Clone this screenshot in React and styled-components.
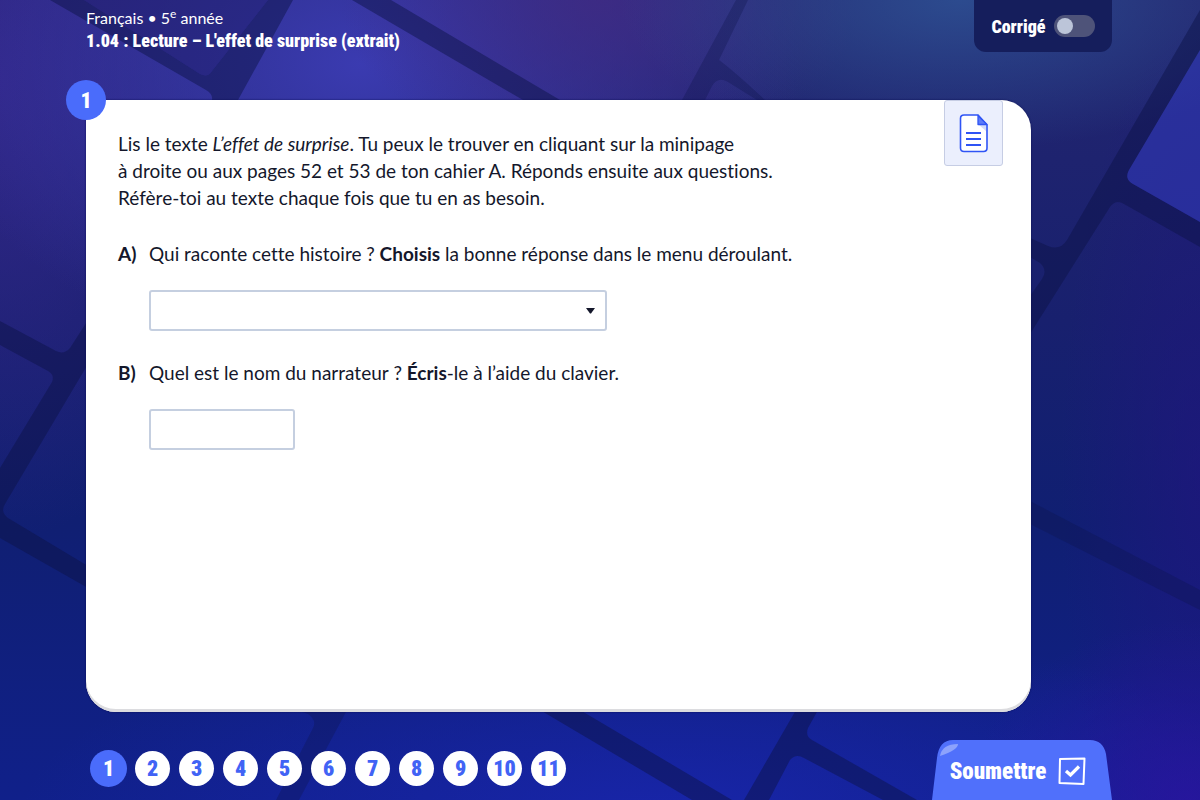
import React, { useState } from "react";
import styled, { createGlobalStyle } from "styled-components";

const GlobalStyle = createGlobalStyle`
  * {
    box-sizing: border-box;
  }
  body {
    margin: 0;
    background: #161c7c;
    font-family: Lato, "Open Sans", sans-serif;
    font-variant-ligatures: none;
    color: #14172b;
  }
  button, input, select {
    font: inherit;
    color: inherit;
  }
`;

const displayFont = `"Liberation Sans Narrow", "Roboto Condensed", Roboto, sans-serif`;

const Page = styled.div`
  position: relative;
  isolation: isolate;
  display: flex;
  flex-direction: column;
  min-height: 100vh;
  padding: 0 88px 0 86px;
  overflow: hidden;
  background:
    radial-gradient(ellipse 340px 150px at 80% 0, rgba(46, 84, 150, 0.8), transparent),
    radial-gradient(ellipse 260px 160px at 50% 0, rgba(64, 42, 130, 0.8), transparent),
    radial-gradient(ellipse 440px 300px at 30% 8%, rgba(60, 60, 180, 0.95), transparent),
    radial-gradient(ellipse 260px 460px at 0 10%, rgba(56, 40, 146, 0.7), transparent),
    radial-gradient(ellipse 220px 180px at 99% 100%, rgba(42, 20, 160, 0.8), transparent),
    radial-gradient(ellipse 140px 460px at 100% 60%, rgba(34, 20, 128, 0.6), transparent),
    radial-gradient(ellipse 640px 200px at 55% 102%, rgba(26, 38, 176, 0.8), transparent),
    linear-gradient(#242670, #18206e 40%, #101f72 65%, #10208a);
`;

const Backdrop = styled.svg`
  position: absolute;
  inset: 0;
  z-index: -1;
  width: 100%;
  height: 100%;
`;

const Header = styled.header`
  display: flex;
  justify-content: space-between;
  align-items: flex-start;
  height: 100px;
  color: #fff;
`;

const Heading = styled.div`
  padding-top: 8px;
`;

const Course = styled.p`
  margin: 0;
  font-size: 16px;
  line-height: 20px;

  sup {
    font-size: 12px;
    line-height: 0;
  }
`;

const Title = styled.h1`
  margin: 0;
  font-family: ${displayFont};
  font-size: 18px;
  font-weight: 900;
  line-height: 26px;
`;

const AnswerKey = styled.label`
  display: flex;
  align-items: center;
  justify-content: center;
  gap: 8px;
  width: 138px;
  height: 52px;
  border-radius: 0 0 12px 12px;
  background: #151e5c;
  font-family: ${displayFont};
  font-size: 18px;
  font-weight: 900;
  cursor: pointer;
`;

const Toggle = styled.input`
  appearance: none;
  width: 41px;
  height: 22px;
  margin: 0;
  padding: 3px;
  border-radius: 11px;
  background: #4e5379;
  cursor: pointer;

  &::before {
    content: "";
    display: block;
    width: 16px;
    height: 16px;
    border-radius: 50%;
    background: #bcc5d9;
  }
  &:checked::before {
    margin-left: auto;
  }
`;

const Card = styled.main`
  position: relative;
  flex: 1;
  display: flex;
  justify-content: space-between;
  align-items: flex-start;
  margin-right: 81px;
  padding: 0 28px 32px 32px;
  border-radius: 0 30px 30px 30px;
  background: #fff;
  box-shadow: inset 0 -3px 0 #dcdcdf, 0 0 2px #0b0f50;
`;

const CardNumber = styled.div`
  position: absolute;
  top: -20px;
  left: -20px;
  display: grid;
  place-items: center;
  width: 40px;
  height: 40px;
  border-radius: 50%;
  background: #4a6cfb;
  color: #fff;
  font-family: ${displayFont};
  font-size: 22px;
  font-weight: 900;
`;

const Content = styled.div`
  padding-top: 30px;
  font-size: 19px;
  line-height: 27px;
`;

const Intro = styled.p`
  margin: 0 0 29px;
`;

const Question = styled.div`
  display: grid;
  grid-template-columns: 31px auto;
  row-gap: 23px;
  margin-bottom: 28px;
`;

const Letter = styled.strong`
  font-weight: 700;
`;

const Field = styled.div`
  grid-column: 2;
  position: relative;
  width: ${props => props.$width}px;
  height: 41px;

  svg {
    position: absolute;
    top: 18px;
    right: 12px;
    pointer-events: none;
  }
`;

const controlStyles = `
  display: block;
  appearance: none;
  width: 100%;
  height: 100%;
  padding: 0 12px;
  border: 2px solid #c5cfe0;
  border-radius: 3px;
  background: #fff;
`;

const Select = styled.select`
  ${controlStyles}
`;

const TextInput = styled.input`
  ${controlStyles}
`;

const DocumentButton = styled.button`
  display: grid;
  place-items: center;
  width: 59px;
  height: 66px;
  padding: 0;
  border: 1px solid #c6cde4;
  border-radius: 3px;
  background: #ebeffd;
  cursor: pointer;
`;

const Footer = styled.footer`
  display: flex;
  justify-content: space-between;
  height: 88px;
  padding-top: 28px;
`;

const Pages = styled.nav`
  display: flex;
  align-items: center;
  align-self: flex-start;
  gap: 9px;
  height: 57px;
  padding-left: 5px;
`;

const PageButton = styled.button`
  display: grid;
  place-items: center;
  width: ${props => (props.$active ? 37 : 35)}px;
  height: ${props => (props.$active ? 37 : 35)}px;
  margin: 0 ${props => (props.$active ? -1 : 0)}px;
  padding: 0;
  border: 0;
  border-radius: 50%;
  background: ${props => (props.$active ? "#4a6cfb" : "#fff")};
  color: ${props => (props.$active ? "#fff" : "#4163f5")};
  font-family: ${displayFont};
  font-size: 22px;
  font-weight: 900;
  cursor: pointer;
`;

const SubmitButton = styled.button`
  position: relative;
  isolation: isolate;
  display: flex;
  align-items: center;
  justify-content: center;
  gap: 12px;
  width: 180px;
  height: 60px;
  padding: 2px 8px 0 0;
  border: 0;
  background: none;
  color: #fff;
  font-family: ${displayFont};
  font-size: 23px;
  font-weight: 900;
  cursor: pointer;
`;

const SubmitShape = styled.svg`
  position: absolute;
  inset: 0;
  z-index: -1;
`;

const Wallpaper = () => (
  <Backdrop viewBox="0 0 1200 800" preserveAspectRatio="none" aria-hidden="true">
    <g fill="#0d1348" fillOpacity="0.48">
      <path d="M50 0H84L200 74Q208 78 212 71L268 0H293L238 100H212Q213 94 206 90Z" />
      <path d="M352 0H391L560 100H523Z" />
      <path d="M1200 10V50L1129 170Q1124 179 1133 184L1200 222V247L1124 204Q1116 199 1110 207L1030 334V296L1042 279Q1048 270 1040 263L1030 257V238L1048 246Q1060 251 1067 240Z" />
      <path d="M0 321L56 351Q64 355 70 348L88 320V364L5 504Q0 512 8 518L88 566V588L0 538V468L52 382Q55 375 48 371L0 345Z" />
      <path d="M540 710H580L732 800H692Z" />
      <path d="M796 710H818L808 728Q805 736 812 740L917 800H883L804 758Q796 753 790 760L769 800H744Z" />
    </g>
    <g fill="#0d1348" fillOpacity="0.3">
      <path d="M736 0H748L719 60Q735 72 765 100H757L728 82Q718 76 712 86L705 100H682Z" />
      <path d="M297 710H347L299 800H276L313 728Q317 720 308 714Z" />
      <path d="M1030 501L1200 590V610L1030 524Z" />
    </g>
    <path d="M84 0H268L212 71Q208 78 200 74Z" fill="#191660" fillOpacity="0.4" />
    <path d="M1200 50V222L1133 184Q1124 179 1129 170Z" fill="#3038b8" fillOpacity="0.6" />
  </Backdrop>
);

const DocumentIcon = () => (
  <svg width="30" height="40" viewBox="0 0 30 40" fill="none" aria-hidden="true">
    <path
      d="M5 2H19L28 12V35Q28 38.500 24.500 38.500H5Q1.500 38.500 1.500 35V5.500Q1.500 2 5 2Z"
      fill="#fff"
      stroke="#2f54f5"
      strokeWidth="1.600"
    />
    <path d="M20 12H27V18Z" fill="#d3dbfa" />
    <path d="M19 2.500V11.500H28Z" fill="#5c7bf8" stroke="#2f54f5" strokeWidth="1.300" strokeLinejoin="round" />
    <path d="M7 20H22M7 26H22M7 32H22" stroke="#2f54f5" strokeWidth="2" />
  </svg>
);

const CheckIcon = () => (
  <svg width="28" height="28" viewBox="0 0 28 28" fill="none" stroke="#fff" aria-hidden="true">
    <path d="M2 2L26.500 1.500L25.500 27L1.500 26Z" strokeWidth="2" strokeLinejoin="round" />
    <path d="M8 14L12.500 18L21 9.500" strokeWidth="3.200" />
  </svg>
);

const pages = [1, 2, 3, 4, 5, 6, 7, 8, 9, 10, 11];

const App = () => {
  const [page, setPage] = useState(1);
  const [answers, setAnswers] = useState({ narrator: "", name: "" });

  const changeHandler = event => {
    setAnswers({ ...answers, [event.target.name]: event.target.value });
  };

  return (
    <>
      <GlobalStyle />
      <Page>
        <Wallpaper />
        <Header>
          <Heading>
            <Course>Français • 5<sup>e</sup> année</Course>
            <Title>1.04 : Lecture – L'effet de surprise (extrait)</Title>
          </Heading>
          <AnswerKey>
            Corrigé
            <Toggle type="checkbox" role="switch" />
          </AnswerKey>
        </Header>

        <Card>
          <CardNumber>1</CardNumber>
          <Content>
            <Intro>
              Lis le texte <em>L’effet de surprise</em>. Tu peux le trouver en cliquant sur la minipage
              <br />
              à droite ou aux pages 52 et 53 de ton cahier A. Réponds ensuite aux questions.
              <br />
              Réfère-toi au texte chaque fois que tu en as besoin.
            </Intro>
            <Question>
              <Letter>A)</Letter>
              <label htmlFor="narrator">
                Qui raconte cette histoire&#8239;? <strong>Choisis</strong> la bonne réponse dans le menu déroulant.
              </label>
              <Field $width={458}>
                <Select id="narrator" name="narrator" value={answers.narrator} onChange={changeHandler}>
                  <option value=""></option>
                </Select>
                <svg width="9" height="6" viewBox="0 0 9 6" aria-hidden="true">
                  <path d="M0 0H9L5 5.500H4Z" fill="#14172b" />
                </svg>
              </Field>
            </Question>
            <Question>
              <Letter>B)</Letter>
              <label htmlFor="name">
                Quel est le nom du narrateur&#8239;? <strong>Écris</strong>-le à l’aide du clavier.
              </label>
              <Field $width={146}>
                <TextInput id="name" name="name" value={answers.name} onChange={changeHandler} />
              </Field>
            </Question>
          </Content>
          <DocumentButton type="button" aria-label="Texte">
            <DocumentIcon />
          </DocumentButton>
        </Card>

        <Footer>
          <Pages>
            {pages.map(n => (
              <PageButton key={n} type="button" $active={n === page} onClick={() => setPage(n)}>
                {n}
              </PageButton>
            ))}
          </Pages>
          <SubmitButton type="button">
            <SubmitShape width="180" height="60" viewBox="0 0 180 60" aria-hidden="true">
              <path d="M0 60L5 18Q7 0 21 0H158Q171 0 174 14L180 60Z" fill="#5070fb" />
              <path d="M8 16Q10 4 26 4Q26 10 8 16Z" fill="#8da2fc" />
            </SubmitShape>
            Soumettre
            <CheckIcon />
          </SubmitButton>
        </Footer>
      </Page>
    </>
  );
};

export default App;
